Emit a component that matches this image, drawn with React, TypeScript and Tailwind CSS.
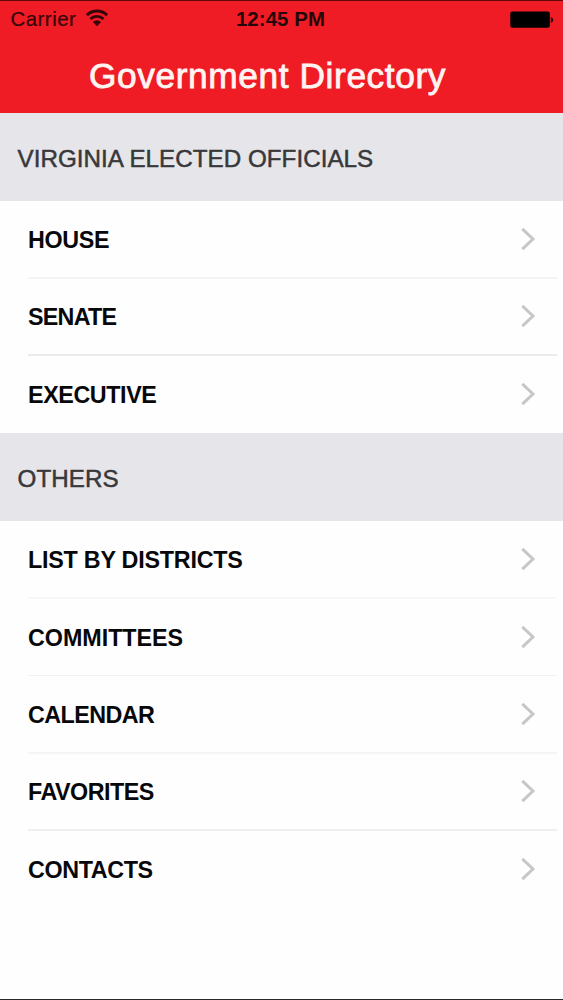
type Item = { label: string; tracking: string; row: string; line: string };

const officials: Item[] = [
  { label: 'HOUSE', tracking: 'tracking-[-0.35px]', row: 'h-[78px]', line: 'border-b-2 border-[#f4f4f5]' },
  { label: 'SENATE', tracking: 'tracking-[-0.75px]', row: 'h-[77px]', line: 'border-b-2 border-[#ebebed]' },
  { label: 'EXECUTIVE', tracking: 'tracking-[-0.4px]', row: 'h-[77px]', line: '' },
];

const others: Item[] = [
  { label: 'LIST BY DISTRICTS', tracking: 'tracking-[-0.22px]', row: 'h-[78px]', line: 'border-b-2 border-[#f8f6f7]' },
  { label: 'COMMITTEES', tracking: 'tracking-[-0.02px]', row: 'h-[77px]', line: 'border-b border-[#f1f1f2]' },
  { label: 'CALENDAR', tracking: 'tracking-[-0.55px]', row: 'h-[78px]', line: 'border-b-2 border-[#f5f5f6]' },
  { label: 'FAVORITES', tracking: 'tracking-[-0.5px]', row: 'h-[77px]', line: 'border-b-2 border-[#f0eff0]' },
  { label: 'CONTACTS', tracking: 'tracking-[-0.38px]', row: 'h-[77px]', line: '' },
];

function WifiIcon() {
  return (
    <svg className="ml-[10px] mt-[8px] h-[17px] w-[22px]" viewBox="0 0 22 17" fill="none" stroke="#350508">
      <path d="M0.9 6.1A14.2 14.2 0 0 1 21.1 6.1" strokeWidth="3" />
      <path d="M4.5 10A9.2 9.2 0 0 1 17.5 10" strokeWidth="2.8" />
      <path d="M11 17L7.2 13A5.4 5.4 0 0 1 14.8 13Z" fill="#350508" stroke="#350508" strokeWidth="0.4" />
    </svg>
  );
}

function BatteryIcon() {
  return (
    <svg className="h-[18px] w-[44px]" viewBox="0 0 44 18">
      <rect x="0.3" y="0.5" width="39.5" height="16.3" rx="2" fill="#000" />
      <path d="M40.8 6Q43.3 7 43.3 9T40.8 12Z" fill="#26080a" />
    </svg>
  );
}

function Chevron() {
  return (
    <svg className="mr-[27px] mb-[1px] h-[24px] w-[16px]" viewBox="0 0 16 24" fill="none">
      <path d="M2.3 1.8L13 12L2.3 22.2" stroke="#c7c7c9" strokeWidth="3" />
    </svg>
  );
}

function Section({ title }: { title: string }) {
  return (
    <h2 className="flex h-[88px] items-center bg-[#e6e6ea] pt-[4px] pl-[17.6px] text-[24.2px] leading-none font-normal tracking-[0.03px] text-[#38383b] [-webkit-text-stroke:0.5px_#38383b]">
      {title}
    </h2>
  );
}

function List({ items }: { items: Item[] }) {
  return (
    <ul>
      {items.map((item) => (
        <li key={item.label} className={`flex pl-7 ${item.row}`}>
          <div className={`mr-[6px] flex flex-1 items-center justify-between ${item.line}`}>
            <span className={`pt-[2.5px] text-[23.3px] leading-none font-bold text-[#08080a] ${item.tracking}`}>
              {item.label}
            </span>
            <span className="-mr-[6px]">
              <Chevron />
            </span>
          </div>
        </li>
      ))}
    </ul>
  );
}

export default function App() {
  return (
    <div className="flex h-[1000px] w-[563px] flex-col overflow-hidden border-b border-[#29292c] bg-[#fefefe] font-['Liberation_Sans',Arial,sans-serif]">
      <header className="h-[113px] shrink-0 border-t border-[#60070b] bg-[#ef1c25]">
        <div className="grid h-[37px] grid-cols-[1fr_auto_1fr] text-[20.4px] leading-[37px] text-[#350508]">
          <div className="flex pl-[10.5px]">
            <span className="tracking-[0.5px] [-webkit-text-stroke:0.2px_#350508]">Carrier</span>
            <WifiIcon />
          </div>
          <span className="pr-[2px] font-bold tracking-[0.1px] text-[#25070a]">12:45 PM</span>
          <div className="flex items-center justify-end pr-[9px]">
            <BatteryIcon />
          </div>
        </div>
        <h1 className="pr-[28px] text-center text-[35.3px] leading-[76px] font-normal tracking-[0.6px] whitespace-nowrap text-[#fff4f2] [-webkit-text-stroke:0.8px_#fff4f2]">
          Government Directory
        </h1>
      </header>
      <main>
        <Section title="VIRGINIA ELECTED OFFICIALS" />
        <List items={officials} />
        <Section title="OTHERS" />
        <List items={others} />
      </main>
    </div>
  );
}
